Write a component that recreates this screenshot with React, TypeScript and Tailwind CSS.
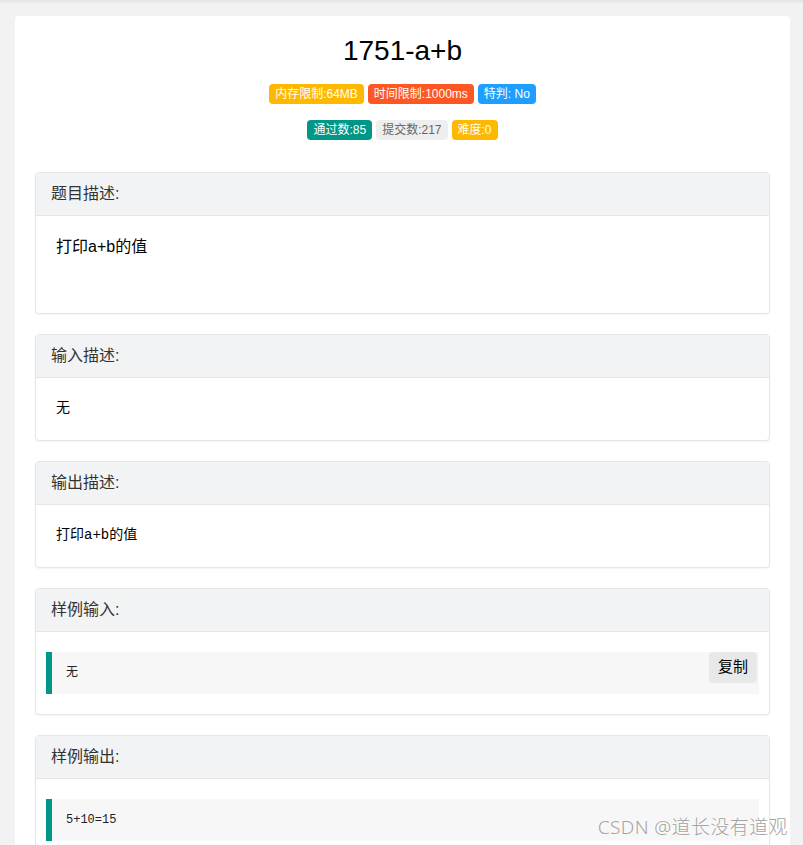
import type { ReactNode } from "react";

const SANS = "font-['Liberation_Sans','Noto_Sans_CJK_SC',sans-serif]";
const MONO = "font-['Liberation_Mono','Noto_Sans_CJK_SC',monospace]";

type Badge = { label: string; cls: string };

const ROW1: Badge[] = [
  { label: "内存限制:64MB", cls: "bg-[#ffb800] text-white" },
  { label: "时间限制:1000ms", cls: "bg-[#ff5722] text-white" },
  { label: "特判: No", cls: "bg-[#1e9fff] text-white" },
];

const ROW2: Badge[] = [
  { label: "通过数:85", cls: "bg-[#009688] text-white" },
  { label: "提交数:217", cls: "bg-[#eeeeee] text-[#666]" },
  { label: "难度:0", cls: "bg-[#ffb800] text-white" },
];

function BadgeRow({ items, className }: { items: Badge[]; className?: string }) {
  return (
    <div className={`flex justify-center gap-1 ${className ?? ""}`}>
      {items.map((b) => (
        <span
          key={b.label}
          className={`h-5 px-1.5 rounded-sm text-xs leading-5 whitespace-nowrap ${b.cls}`}
        >
          {b.label}
        </span>
      ))}
    </div>
  );
}

function Panel({ title, children }: { title: string; children: ReactNode }) {
  return (
    <div className="border border-[#e6e6e6] rounded-sm bg-white shadow-[0_1px_2px_rgba(0,0,0,0.05)]">
      <div className="h-[43px] border-b border-[#e6e6e6] bg-[#f2f3f5] pl-[15px] text-base leading-[42px] text-[#333]">
        {title}
      </div>
      {children}
    </div>
  );
}

function CodeBlock({ text, copy }: { text: string; copy?: boolean }) {
  return (
    <div className="relative border-l-[6px] border-[#009688] bg-[#f7f7f7] py-[11px] pl-[14px]">
      <pre className={`${MONO} text-xs leading-5 text-[#222]`}>{text}</pre>
      {copy && (
        <button
          type="button"
          className={`${SANS} absolute top-0 right-[2px] h-[31px] w-12 rounded-sm bg-[#e8e8e8] text-[15px] text-black`}
        >
          复制
        </button>
      )}
    </div>
  );
}

export default function App() {
  return (
    <div className={`${SANS} relative h-[845px] overflow-hidden bg-[#f2f2f2]`}>
      <div className="absolute inset-x-0 top-0 h-[4px] bg-gradient-to-b from-[#e4e4e4] to-[#f2f2f2]" />

      <div className="relative ml-[15px] mr-[13px] mt-4 rounded bg-white px-5 pt-5">
        <h1 className="text-center text-[28px] leading-[30px] text-black">1751-a+b</h1>
        <BadgeRow items={ROW1} className="mt-[18px]" />
        <BadgeRow items={ROW2} className="mt-4" />

        <div className="mt-8 flex flex-col gap-5">
          <Panel title="题目描述:">
            <div className="h-[97px] px-5 pt-[19px] text-base leading-6 text-black">打印a+b的值</div>
          </Panel>

          <Panel title="输入描述:">
            <div className="h-[62px] px-5 pt-5">
              <pre className={`${MONO} text-sm leading-5 text-black`}>无</pre>
            </div>
          </Panel>

          <Panel title="输出描述:">
            <div className="h-[62px] px-5 pt-5">
              <pre className={`${MONO} text-sm leading-5 text-black`}>打印a+b的值</pre>
            </div>
          </Panel>

          <Panel title="样例输入:">
            <div className="px-[10px] py-5">
              <CodeBlock text="无" copy />
            </div>
          </Panel>

          <Panel title="样例输出:">
            <div className="px-[10px] py-5">
              <CodeBlock text="5+10=15" />
            </div>
          </Panel>
        </div>
      </div>

      <div className="absolute right-[15px] bottom-[6px] font-['Noto_Sans','Noto_Sans_CJK_SC',sans-serif] text-[19px] font-light leading-6 tracking-[0.4px] text-[#a3a3a3] [text-shadow:0_0_2px_#fff]">
        CSDN @道长没有道观
      </div>
    </div>
  );
}
